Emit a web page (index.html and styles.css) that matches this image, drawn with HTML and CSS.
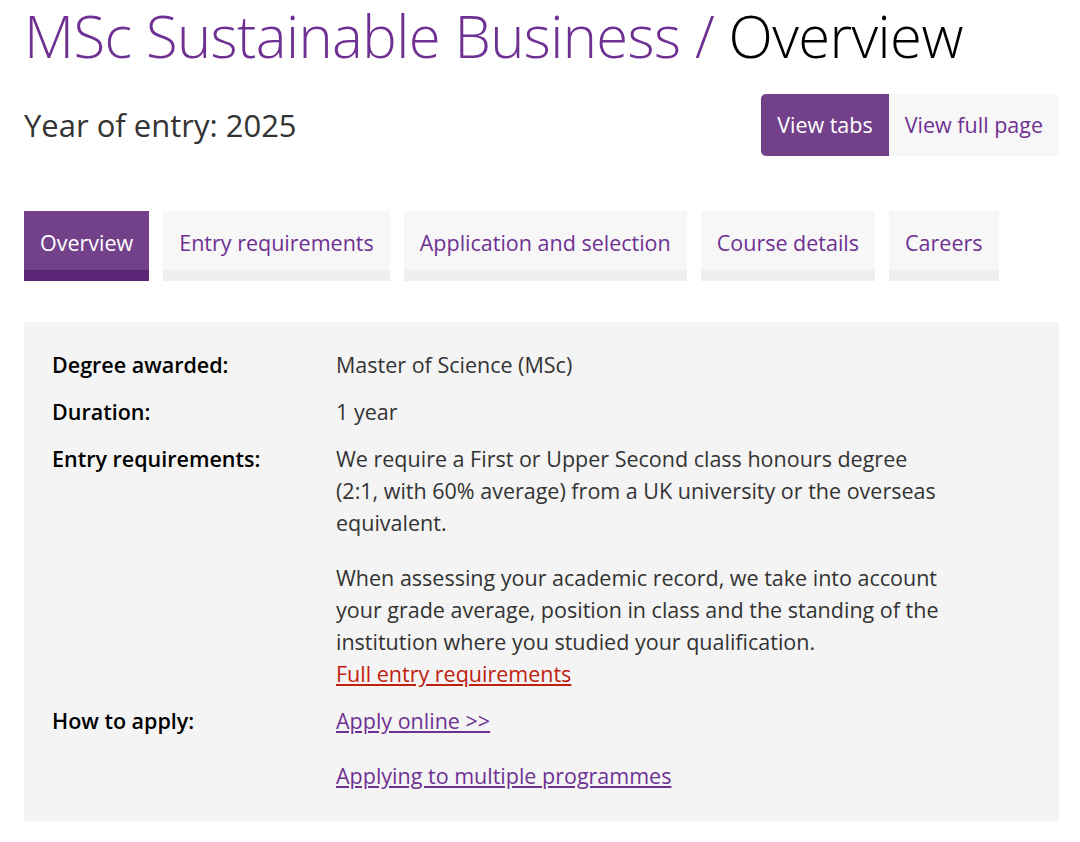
FILE: index.html
```html
<!DOCTYPE html>
<html lang="en">
<head>
  <meta charset="UTF-8" />
  <meta name="viewport" content="width=device-width, initial-scale=1.0"/>
  <title>MSc Sustainable Business</title>
  <link rel="stylesheet" href="styles.css">
</head>
<body>
  <header>
    <h1><span class="course">MSc Sustainable Business /</span> Overview</h1>
    <div class="entry-row">
      <p class="year">Year of entry: 2025</p>
      <div class="view-switch">
        <a href="#" class="view active">View tabs</a>
        <a href="#" class="view">View full page</a>
      </div>
    </div>
  </header>
  <nav class="tabs">
    <a href="#" class="tab active">Overview</a>
    <a href="#" class="tab">Entry requirements</a>
    <a href="#" class="tab">Application and selection</a>
    <a href="#" class="tab">Course details</a>
    <a href="#" class="tab">Careers</a>
  </nav>
  <main class="facts">
    <div class="label">Degree awarded:</div>
    <div class="value"><p>Master of Science (MSc)</p></div>

    <div class="label">Duration:</div>
    <div class="value"><p>1 year</p></div>

    <div class="label">Entry requirements:</div>
    <div class="value">
      <p>We require a First or Upper Second class honours degree (2:1, with 60% average) from a UK university or the overseas equivalent.</p>
      <p>When assessing your academic record, we take into account your grade average, position in class and the standing of the institution where you studied your qualification.<br>
      <a href="#" class="red-link">Full entry requirements</a></p>
    </div>

    <div class="label">How to apply:</div>
    <div class="value">
      <p><a href="#">Apply online &gt;&gt;</a></p>
      <p><a href="#">Applying to multiple programmes</a></p>
    </div>
  </main>
</body>
</html>
```

FILE: styles.css
```css
body {
  margin: 0;
  padding: 0 21px 0 24px;
  font-family: "Open Sans", "Liberation Sans", sans-serif;
  color: #333;
  background: #fff;
}
h1 {
  margin: -4px 0 0;
  font-size: 58px;
  font-weight: 300;
  line-height: 80px;
  letter-spacing: -0.6px;
  color: #000;
}
.course {
  color: #6f3093;
}
.entry-row {
  display: flex;
  justify-content: space-between;
  align-items: center;
  margin-top: 18px;
}
.year {
  margin: 0;
  font-size: 31px;
  color: #333;
}
.view-switch {
  display: flex;
  border-radius: 5px;
  overflow: hidden;
  background: #f7f7f7;
}
.view {
  padding: 15px 16px;
  font-size: 21.5px;
  line-height: 32px;
  color: #6f3093;
  text-decoration: none;
}
.view.active {
  background: #73418a;
  color: #fff;
}
.tabs {
  display: flex;
  gap: 14px;
  margin-top: 55px;
}
.tab {
  padding: 21px 16px 17px;
  font-size: 21.5px;
  line-height: 21px;
  color: #6f3093;
  text-decoration: none;
  background: #f7f7f7;
  border-bottom: 11px solid #efefef;
}
.tab.active {
  background: #73418a;
  color: #fff;
  border-bottom-color: #5c2575;
}
.facts {
  display: grid;
  grid-template-columns: 284px 1fr;
  row-gap: 15px;
  margin-top: 41px;
  padding: 27px 28px 29px;
  background: #f4f4f4;
  font-size: 21.5px;
  line-height: 32px;
}
.label {
  font-weight: 600;
  color: #000;
}
.value {
  max-width: 612px;
}
.value p {
  margin: 0 0 23px;
}
.value p:last-child {
  margin-bottom: 0;
}
.value a {
  color: #6f3093;
}
.value a.red-link {
  color: #c0200e;
}
```
